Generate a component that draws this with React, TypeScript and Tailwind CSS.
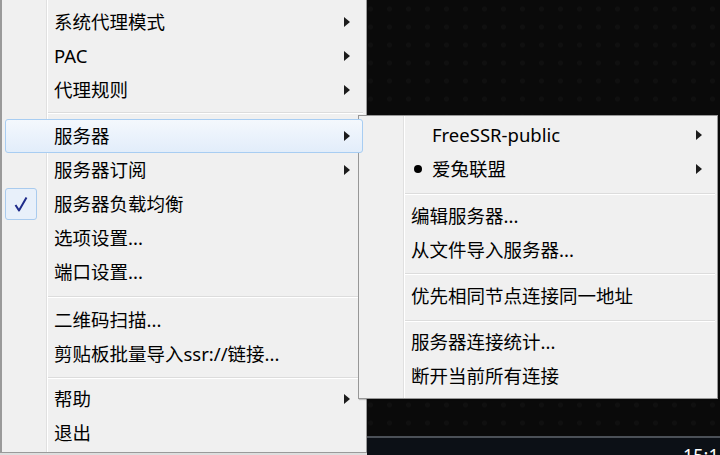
import React from "react"

type Item = {label: string; arrow?: boolean; checked?: boolean; active?: boolean; prefix?: "dot" | "blank"}

const font = "font-['Noto_Sans','Noto_Sans_CJK_SC',sans-serif]"

function Arrow() {
  return (
    <svg width="6" height="10" viewBox="0 0 6 10" className="shrink-0">
      <polygon points="0,0 6,5 0,10" fill="#1c1c1c" />
    </svg>
  )
}

function Check() {
  return (
    <div className="w-[33px] h-[32px] rounded-[3px] border border-[#a9cbee] bg-[#e8f0fa] flex items-center justify-center">
      <svg width="14" height="16" viewBox="0 0 14 16">
        <path d="M1.5 9 L5 14.5 L12.5 1.5" fill="none" stroke="#1f2c8a" strokeWidth="2" strokeLinejoin="round" />
      </svg>
    </div>
  )
}

function Row({item, gap}: {item: Item; gap: string}) {
  return (
    <div
      className={
        "relative z-10 h-[34px] flex items-center pr-[12px] rounded-[3px] border " +
        (item.active ? "border-[#a8cdf2] bg-linear-to-b from-[#f4f8fd] to-[#e2edfa]" : "border-transparent")
      }
    >
      <div className="w-[32px] shrink-0 -ml-px flex items-center">{item.checked && <Check />}</div>
      <div className={gap + " shrink-0"} />
      {item.prefix === "dot" && (
        <div className="w-[21px] shrink-0 flex items-center pl-[3px]">
          <span className="w-[8px] h-[8px] rounded-full bg-black" />
        </div>
      )}
      {item.prefix === "blank" && <div className="w-[21px] shrink-0" />}
      <span className="flex-1 whitespace-nowrap text-black">{item.label}</span>
      {item.arrow && <Arrow />}
    </div>
  )
}

function Sep({className}: {className: string}) {
  return (
    <div className={className + " ml-[43px]"}>
      <div className="h-px bg-[#dcdcdc]" />
      <div className="h-px bg-white" />
    </div>
  )
}

const mainTop: Item[] = [
  {label: "系统代理模式", arrow: true},
  {label: "PAC", arrow: true},
  {label: "代理规则", arrow: true},
]
const mainMid: Item[] = [
  {label: "服务器", arrow: true, active: true},
  {label: "服务器订阅", arrow: true},
  {label: "服务器负载均衡", checked: true},
  {label: "选项设置..."},
  {label: "端口设置..."},
]
const mainScan: Item[] = [{label: "二维码扫描..."}, {label: "剪贴板批量导入ssr://链接..."}]
const mainEnd: Item[] = [{label: "帮助", arrow: true}, {label: "退出"}]

export default function App() {
  return (
    <div className={font + " relative w-[720px] h-[455px] overflow-hidden flex flex-col bg-[#0a0a0a] text-[18.5px] leading-none"}>
      {/* desktop */}
      <div className="flex-1 bg-[radial-gradient(circle,#101010_0_2px,transparent_3px)] bg-[length:19px_18px]" />
      {/* taskbar */}
      <div className="h-[19px] shrink-0 border-t-2 border-[#4b5057] bg-[#0c1016] flex overflow-hidden">
        <div className="ml-auto w-[37px] pt-[8px] text-white whitespace-nowrap text-[18px]">15:14</div>
      </div>

      {/* main menu */}
      <div className="absolute left-0 top-0 w-[367px] h-[455px] bg-[#dedede]">
        <div className="relative h-[453px] bg-[#f0f0f0] border-l-2 border-r border-b border-[#9a9a9a] px-[3px] pt-[5px]">
          <div className="absolute left-[44px] top-0 bottom-0 w-[2px] border-l border-[#e0e0e0] bg-white" />
          {mainTop.map((it) => <Row key={it.label} item={it} gap="w-[17px]" />)}
          <Sep className="h-[12px] pt-[5px]" />
          {mainMid.map((it) => <Row key={it.label} item={it} gap="w-[17px]" />)}
          <Sep className="h-[14px] pt-[7px]" />
          {mainScan.map((it) => <Row key={it.label} item={it} gap="w-[17px]" />)}
          <Sep className="h-[11px] pt-[6px]" />
          {mainEnd.map((it) => <Row key={it.label} item={it} gap="w-[17px]" />)}
        </div>
      </div>

      {/* server submenu */}
      <div className="absolute left-[358px] top-[115px] w-[360px] h-[284px] bg-[#f0f0f0] border border-[#979797] px-[2px] pt-[2px] shadow-[1px_1px_1px_rgba(0,0,0,0.2)]">
        <div className="absolute left-[44px] top-0 bottom-0 w-[2px] border-l border-[#e0e0e0] bg-white" />
        <Row item={{label: "FreeSSR-public", arrow: true, prefix: "blank"}} gap="w-[18px]" />
        <Row item={{label: "爱兔联盟", arrow: true, prefix: "dot"}} gap="w-[18px]" />
        <Sep className="h-[13px] pt-[7px]" />
        <Row item={{label: "编辑服务器..."}} gap="w-[18px]" />
        <Row item={{label: "从文件导入服务器..."}} gap="w-[18px]" />
        <Sep className="h-[12px] pt-[6px]" />
        <Row item={{label: "优先相同节点连接同一地址"}} gap="w-[18px]" />
        <Sep className="h-[12px] pt-[7px]" />
        <Row item={{label: "服务器连接统计..."}} gap="w-[18px]" />
        <Row item={{label: "断开当前所有连接"}} gap="w-[18px]" />
      </div>
    </div>
  )
}
